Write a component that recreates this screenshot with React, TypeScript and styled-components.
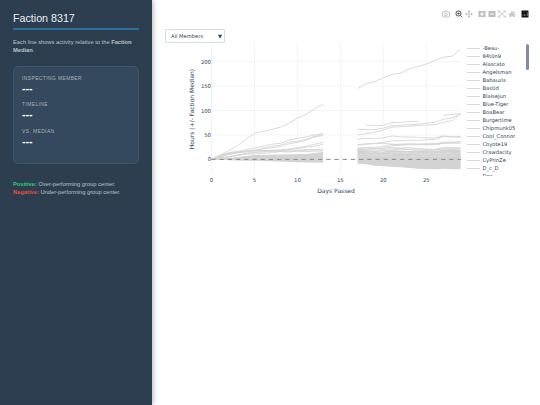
import * as React from "react";
import styled, { createGlobalStyle } from "styled-components";

const GlobalStyle = createGlobalStyle`
  * {
    box-sizing: border-box;
  }

  body {
    background: #fff;
    font-family: "Liberation Sans", Arial, sans-serif;
    margin: 0;
  }
`;

const Page = styled.div`
  display: flex;
  height: 100vh;
  overflow: hidden;
`;

const Sidebar = styled.aside`
  background: #2c3e50;
  box-shadow: 1px 0 5px rgba(0, 0, 0, 0.3);
  color: #ecf0f1;
  flex: 0 0 152px;
  padding: 11px 13px;
`;

const Title = styled.h1`
  border-bottom: 2px solid #2b6f9f;
  font-size: 10.7px;
  font-weight: 400;
  line-height: 15px;
  margin: 0 0 8px;
  padding-bottom: 2px;
`;

const Note = styled.p`
  color: #bdc3c7;
  font-size: 5.74px;
  line-height: 8.4px;
  margin: 0;
`;

const StatCard = styled.section`
  background: #34495e;
  border: 1px solid #3d566e;
  border-radius: 5px;
  height: 98px;
  margin: 11px 0 16px;
  padding: 8px;
`;

const Stat = styled.div`
  height: 26.6px;
`;

const StatLabel = styled.div`
  color: #aab4ba;
  font-size: 4.9px;
  letter-spacing: 0.43px;
  line-height: 7px;
`;

const StatValue = styled.div`
  color: #fff;
  font-size: 10.7px;
  font-weight: 700;
  line-height: 12px;
`;

const Tone = styled.strong<{ $color: string }>`
  color: ${(props) => props.$color};
`;

const Main = styled.main`
  color: #2a3f5f;
  flex: 1;
  font-family: "DejaVu Sans", Verdana, sans-serif;
  padding: 10px 10px 0 13px;
`;

const ModeBar = styled.div`
  display: flex;
  height: 8px;
  justify-content: flex-end;
  padding-right: 0.6px;
`;

const IconGroup = styled.div`
  display: flex;
  gap: 2.2px;
  margin-left: 5px;
`;

const ModeIcon = styled.svg<{ $active?: boolean }>`
  color: ${(props) => (props.$active ? "#6c6c6c" : "#bcbcbc")};
  height: 8px;
  width: 8px;
`;

const Select = styled.div`
  align-items: center;
  border: 1px solid #d3dae5;
  border-radius: 1px;
  display: flex;
  font-size: 5.2px;
  height: 14px;
  justify-content: space-between;
  margin-top: 11px;
  padding: 0 2px 0 5px;
  width: 60px;
`;

const PlotRow = styled.div`
  display: flex;
`;

const Plot = styled.svg`
  display: block;
  flex: 0 0 302px;
  font-family: "DejaVu Sans", Verdana, sans-serif;
  height: 155px;
`;

const Legend = styled.ul`
  flex: 1;
  font-size: 5.2px;
  height: 133px;
  list-style: none;
  margin: 0;
  overflow: hidden;
  padding: 1.1px 0 0;
`;

const LegendItem = styled.li`
  align-items: center;
  display: flex;
  gap: 2.5px;
  height: 8.03px;
  line-height: 8px;
  white-space: nowrap;

  &::before {
    background: #d9d9d9;
    content: "";
    height: 1px;
    width: 13px;
  }
`;

const ScrollThumb = styled.div`
  background: #808ba4;
  border-radius: 1.5px;
  height: 26px;
  margin: 1px 1px 0 0;
  width: 3px;
`;

const members = [
  "-Beau-",
  "84t0n9",
  "Alascato",
  "Angelsman",
  "Babauzis",
  "Bastid",
  "BlaiseJun",
  "Blue-Tiger",
  "BoaBear",
  "Burgertime",
  "Chipmunk05",
  "Cool_Connor",
  "Coyote19",
  "Crawdacity",
  "CyPrinZe",
  "D_c_D",
  "Dec",
];

// Each series is [first day, value per day...], in hours from the median.
const series: number[][] = [
  [0, 0, 9, 18, 28, 41, 53, 57, 61, 66, 74, 84, 92, 103, 113],
  [0, 0, 7, 14, 16, 20, 23, 27, 31, 33, 39, 43, 46, 50, 53],
  [0, 0, 5, 11, 15, 17, 18, 23, 27, 29, 35, 37, 41, 47, 51],
  [0, 0, 9, 13, 15, 17, 19, 21, 24, 26, 32, 35, 39, 46, 49],
  [0, 0, 5, 10, 13, 16, 18, 18, 18, 20, 21, 24, 27, 31, 35],
  [0, 0, 3, 6, 8, 12, 14, 16, 17, 18, 20, 22, 25, 27, 31],
  [0, 0, 6, 12, 15, 15, 18, 18, 19, 18, 19, 19, 20, 20, 21],
  [0, 0, 3, 5, 9, 12, 15, 15, 16, 16, 17, 17, 19, 19, 19],
  [0, 0, 2, 5, 8, 11, 11, 12, 14, 16, 15, 17, 16, 17, 17],
  [17, 145, 155, 159, 167, 174, 176, 185, 190, 195, 202, 209, 211, 226],
  [17, 62, 61, 61, 64, 69, 70, 71, 72, 74, 76, 82, 85, 92],
  [17, 50, 53, 55, 60, 66, 67, 68, 69, 70, 71, 76, 79, 93],
  [18, 70, 69, 70, 75, 76, 77, 78],
  [27, 90, 92, 94],
  [17, 41, 43, 43, 44, 48, 46, 46, 45, 44, 44, 48, 46, 47],
  [17, 30, 32, 33, 35, 38, 38, 39, 39, 40, 41, 47, 46, 45],
  [17, 29, 31, 32, 33, 31, 31, 32, 31, 32, 32, 35, 35, 37],
  [17, 23, 24, 25, 26, 31, 30, 31, 31, 31, 31, 33, 35, 36],
  [17, 22, 24, 22, 23, 28, 29, 30, 30, 30, 30, 33, 33, 33],
  [17, 20, 21, 23, 22, 25, 23, 24, 22, 21, 20, 25, 24, 24],
  [17, 19, 20, 19, 20, 22, 22, 21, 21, 20, 20, 22, 22, 23],
  [17, 17, 18, 17, 18, 19, 21, 20, 18, 18, 19, 21, 20, 21],
];

// Outline of the dense group of members that sit close to the median.
const bands: [number, number][][] = [
  [[0, 0], [3, 5], [5, 9], [8, 10], [11, 11], [13, 15], [13, -7], [10, -6], [7, -4], [3, -2]],
  [
    [17, 21], [18, 17], [20, 16], [21, 19], [23, 17], [26, 17], [27, 20], [29, 19],
    [29, -20], [28, -20], [27, -19], [26, -20], [24, -19], [22, -16], [20, -14],
    [19, -13], [18, -10], [17, -9],
  ],
];

const px = (day: number) => 46.5 + day * 8.59;
const py = (hours: number) => 116.4 - hours * 0.489;
const toPoints = (points: number[][]) =>
  points.map(([day, hours]) => `${px(day)},${py(hours)}`).join(" ");

function ActivityPlot() {
  return (
    <Plot viewBox="0 0 302 155">
      <g stroke="#edf2f8" strokeWidth="0.8">
        {[0, 5, 10, 15, 20, 25].map((day) => (
          <line key={day} x1={px(day)} x2={px(day)} y1="0" y2="130" />
        ))}
        {[0, 50, 100, 150, 200].map((hours) => (
          <line key={hours} x1="46.5" x2="296" y1={py(hours)} y2={py(hours)} />
        ))}
      </g>
      <g fill="#d3d3d3">
        {bands.map((band, i) => (
          <polygon key={i} points={toPoints(band)} />
        ))}
      </g>
      <g fill="none" stroke="#d3d3d3" strokeWidth="0.85">
        {series.map(([start, ...values], i) => (
          <polyline
            key={i}
            points={toPoints(values.map((value, day) => [start + day, value]))}
          />
        ))}
      </g>
      <g fill="none" stroke="#e4e4e4" strokeWidth="0.35">
        <polyline points={toPoints([[17, 11], [20, 9], [22, 12], [25, 10], [29, 13]])} />
        <polyline points={toPoints([[17, 5], [19, 7], [21, 5], [25, 6], [29, 7]])} />
        <polyline points={toPoints([[18, 13], [20, 14], [23, 14], [26, 12], [28, 14]])} />
      </g>
      <line
        stroke="#808080"
        strokeDasharray="4.1 4.1"
        strokeWidth="0.9"
        x1="46.5"
        x2="296"
        y1={py(0)}
        y2={py(0)}
      />
      <g fill="#2a3f5f" fontSize="5.3">
        {[0, 50, 100, 150, 200].map((hours) => (
          <text key={hours} textAnchor="end" x="46" y={py(hours) + 2}>
            {hours}
          </text>
        ))}
        {[0, 5, 10, 15, 20, 25].map((day) => (
          <text key={day} textAnchor="middle" x={px(day)} y="138.6">
            {day}
          </text>
        ))}
      </g>
      <g fill="#2a3f5f" fontSize="6" textAnchor="middle">
        <text x="171" y="149.7">
          Days Passed
        </text>
        <text transform="translate(28.5 66) rotate(-90)">
          Hours (+/- Faction Median)
        </text>
      </g>
    </Plot>
  );
}

function PlotModeBar() {
  return (
    <ModeBar>
      <IconGroup>
        <ModeIcon viewBox="0 0 16 16">
          <path
            d="M2 4h3l1-2h4l1 2h3l1 1v8l-1 1H2l-1-1V5z"
            fill="none"
            stroke="currentColor"
            strokeWidth="1.8"
          />
          <circle cx="8" cy="9" fill="none" r="2.8" stroke="currentColor" strokeWidth="1.8" />
        </ModeIcon>
      </IconGroup>
      <IconGroup>
        <ModeIcon $active viewBox="0 0 16 16">
          <circle cx="7" cy="7" fill="none" r="5" stroke="currentColor" strokeWidth="2.2" />
          <path
            d="M10.5 10.5l4.5 4.5M4.5 7h5M7 4.5v5"
            stroke="currentColor"
            strokeWidth="2"
          />
        </ModeIcon>
        <ModeIcon viewBox="0 0 16 16">
          <path d="M8 2v12M2 8h12" stroke="currentColor" strokeWidth="1.5" />
          <path
            d="M8 0l3 4H5zM8 16l3-4H5zM0 8l4-3v6zM16 8l-4-3v6z"
            fill="currentColor"
          />
        </ModeIcon>
      </IconGroup>
      <IconGroup>
        <ModeIcon viewBox="0 0 16 16">
          <path d="M1 2h14v12H1zM7 4v3H4v2h3v3h2V9h3V7H9V4z" fill="currentColor" fillRule="evenodd" />
        </ModeIcon>
        <ModeIcon viewBox="0 0 16 16">
          <path d="M1 2h14v12H1zM4 7v2h8V7z" fill="currentColor" fillRule="evenodd" />
        </ModeIcon>
        <ModeIcon viewBox="0 0 16 16">
          <path
            d="M1 5V2h4M11 2h4v3M15 11v3h-4M5 14H1v-3M2 3l12 10M14 3L2 13"
            fill="none"
            stroke="currentColor"
            strokeWidth="1.4"
          />
        </ModeIcon>
        <ModeIcon viewBox="0 0 16 16">
          <path
            d="M8 2l3 2.7V3h2v3.5L15.5 9l-1 1L8 4.2 1.5 10l-1-1zM8 5.5l5 4.5v4H9.5v-3h-3v3H3v-4z"
            fill="currentColor"
          />
        </ModeIcon>
      </IconGroup>
      <IconGroup>
        <ModeIcon viewBox="0 0 16 16">
          <rect fill="#111" height="14" rx="1" width="14" x="1" y="1" />
          <path
            d="M4 12V9M7 12V8M10 12V8M13 12V5M4 5h1M7 4h1M10 5h1"
            stroke="#aaa"
            strokeWidth="1"
          />
        </ModeIcon>
      </IconGroup>
    </ModeBar>
  );
}

export default function App() {
  return (
    <Page>
      <GlobalStyle />

      <Sidebar>
        <Title>Faction 8317</Title>
        <Note>
          Each line shows activity relative to the <strong>Faction Median</strong>.
        </Note>

        <StatCard>
          {["INSPECTING MEMBER", "TIMELINE", "VS. MEDIAN"].map((label) => (
            <Stat key={label}>
              <StatLabel>{label}</StatLabel>
              <StatValue>---</StatValue>
            </Stat>
          ))}
        </StatCard>

        <Note>
          <Tone $color="#2ecc71">Positive:</Tone> Over-performing group center.
          <br />
          <Tone $color="#e74c3c">Negative:</Tone> Under-performing group center.
        </Note>
      </Sidebar>

      <Main>
        <PlotModeBar />
        <Select>
          <span>All Members</span>
          <span>▼</span>
        </Select>
        <PlotRow>
          <ActivityPlot />
          <Legend>
            {members.map((name) => (
              <LegendItem key={name}>{name}</LegendItem>
            ))}
          </Legend>
          <ScrollThumb />
        </PlotRow>
      </Main>
    </Page>
  );
}
